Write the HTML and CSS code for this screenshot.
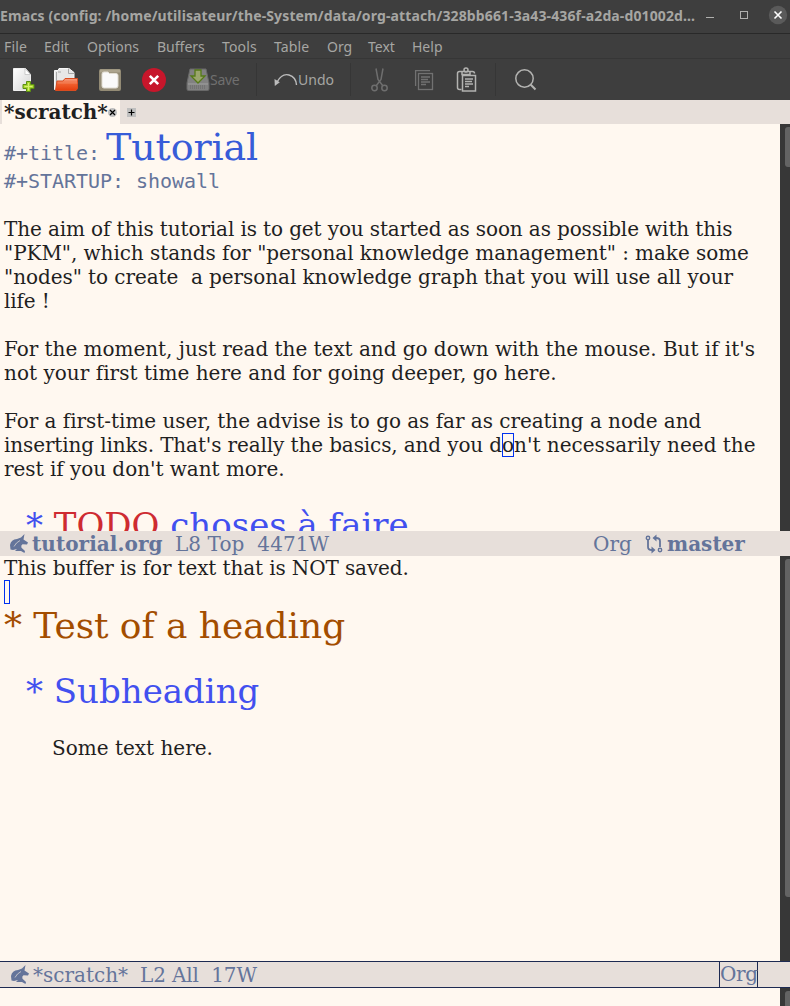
FILE: index.html
```html
<!DOCTYPE html>
<html lang="en">
<head>
<meta charset="utf-8">
<title>Emacs</title>
<link rel="stylesheet" href="styles.css">
</head>
<body>
<div class="window">
  <header class="titlebar">
    <span class="caption">Emacs (config: /home/utilisateur/the-System/data/org-attach/328bb661-3a43-436f-a2da-d01002d…</span>
    <svg class="controls" width="90" height="33" viewBox="0 0 90 33">
      <path d="M6 17.500h8" stroke="#b0b0ae" fill="none"/>
      <rect x="40.500" y="11.500" width="7" height="7" stroke="#b0b0ae" fill="none"/>
      <circle cx="78" cy="15" r="9.200" fill="#5a5a5a"/>
      <path d="M74.500 11.500l7 7m0-7l-7 7" stroke="#fff" stroke-width="1.600"/>
    </svg>
  </header>
  <nav class="menubar">
    <span class="m-file">File</span><span class="m-edit">Edit</span><span class="m-options">Options</span><span class="m-buffers">Buffers</span><span class="m-tools">Tools</span><span class="m-table">Table</span><span class="m-org">Org</span><span class="m-text">Text</span><span class="m-help">Help</span>
  </nav>
  <div class="toolbar">
    <svg class="t-new" width="24" height="26" viewBox="0 0 24 26">
      <defs>
        <linearGradient id="paper" x1="0" y1="0" x2="1" y2="1"><stop offset="0" stop-color="#fff"/><stop offset="1" stop-color="#d5d5d5"/></linearGradient>
        <linearGradient id="orange" x1="0" y1="0" x2="0" y2="1"><stop offset="0" stop-color="#f7a184"/><stop offset=".45" stop-color="#f0602f"/><stop offset="1" stop-color="#e43d0d"/></linearGradient>
      </defs>
      <path d="M1.500 1.500h12l5 6v16h-17z" fill="url(#paper)" stroke="#f0f0f0"/>
      <path d="M13 1.500v6h5.500z" fill="#fff" stroke="#bbb" stroke-width=".7"/>
      <path d="M14.500 14.500h4v3h3.500v4h-3.500v3h-4v-3h-3.500v-4h3.500z" fill="#a5d52d" stroke="#5b8e10"/>
      <path d="M16.500 16v7.500M12.500 19.500h8" stroke="#d7f06e"/>
    </svg>
    <svg class="t-open" width="26" height="26" viewBox="0 0 26 26">
      <path d="M1.500 3.500h3.500l1-2h10l5 4v17h-19.500z" fill="#e7e7e7" stroke="#f6f6f6"/>
      <path d="M3.500 5v17M5 5h3M15.500 1.500v5h5.500" stroke="#a7a7a7" fill="none"/>
      <path d="M2.500 23.500l1.500-9.500h6l2-2.500h12.500v10l-1.500 2z" fill="url(#orange)" stroke="#d94c20"/>
      <path d="M4.500 16h20" stroke="#f79a79" opacity=".5"/>
    </svg>
    <svg class="t-folder" width="24" height="24" viewBox="0 0 24 24">
      <rect x="1" y="1" width="22" height="22" rx="2" fill="#938b75"/>
      <rect x="2" y="1.500" width="20" height="3" fill="#aca48e"/>
      <path d="M4 6q0-2 2-2h4l1.500 1.500H18q2 0 2 2V18q0 2-2 2H6q-2 0-2-2z" fill="#fafafa" stroke="#e1ddd3"/>
    </svg>
    <svg class="t-kill" width="26" height="26" viewBox="0 0 26 26">
      <circle cx="13" cy="13" r="12" fill="#c7162b"/>
      <path d="M8.800 8.800l8.400 8.400m0-8.400l-8.400 8.400" stroke="#fff" stroke-width="2.600"/>
    </svg>
    <svg class="t-save" width="24" height="24" viewBox="0 0 24 24">
      <path d="M4 1h16l3 14v6q0 1.500-1.500 1.500h-19Q1 22.500 1 21v-6z" fill="#818181" stroke="#696969"/>
      <path d="M2 16h20" stroke="#a0a0a0"/><path d="M4 18h16M4 20h16" stroke="#666" stroke-dasharray="1 1"/>
      <path d="M9 2h6v6h4l-7 7-7-7h4z" fill="#9ba66c" stroke="#567a18" stroke-width="1.300"/>
    </svg>
    <span class="save-label">Save</span>
    <i class="sep s1"></i>
    <svg class="t-undo" width="24" height="16" viewBox="0 0 24 16">
      <path d="M3 10Q8 1 15 3q7 2 7.500 10" fill="none" stroke="#bcbcbc" stroke-width="1.400"/>
      <path d="M.5 7l.3 7 5-3.800z" fill="#bcbcbc"/>
    </svg>
    <span class="undo-label">Undo</span>
    <i class="sep s2"></i>
    <svg class="t-cut" width="20" height="26" viewBox="0 0 20 26" fill="none" stroke="#6e6e6e" stroke-width="1.500">
      <path d="M6 1.500l2 11 5 6.500M13 1.500l-2 11-5 6.500"/><circle cx="4.500" cy="21" r="2.700"/><circle cx="14.500" cy="21" r="2.700"/>
    </svg>
    <svg class="t-copy" width="20" height="22" viewBox="0 0 20 22" fill="none" stroke="#717171" stroke-width="1.300">
      <path d="M1.600 17V1.600H16"/><rect x="4.500" y="4.500" width="14" height="16"/><path d="M7 8h9M7 10.500h7M7 13h9M7 15.500h5"/>
    </svg>
    <svg class="t-paste" width="22" height="26" viewBox="0 0 22 26" fill="none" stroke="#b3b3b1" stroke-width="1.500">
      <path d="M5.500 22.500h-2q-2 0-2-2v-14q0-2 2-2h13q2 0 2 2M6 4.500v3h8v-3"/><circle cx="10" cy="3" r="2"/><rect x="6.500" y="8.500" width="13" height="15.500"/><path d="M9 12h8M9 14.500h7M9 17h8M9 19.500h4"/>
    </svg>
    <i class="sep s3"></i>
    <svg class="t-find" width="24" height="24" viewBox="0 0 24 24" fill="none" stroke="#b3b3b1" stroke-width="1.500">
      <circle cx="10.500" cy="10.500" r="8.700"/><path d="M16.800 16.800l4.700 4.700" stroke-width="2"/>
    </svg>
  </div>
  <div class="tabs">
    <div class="tab"><b>*scratch*</b><svg width="9" height="9" viewBox="0 0 9 9"><circle cx="4.500" cy="4.500" r="4.500" fill="#bfbfbf"/><path d="M2 2l5 5m0-5l-5 5" stroke="#000" stroke-width="1.200"/></svg></div>
    <svg class="add" width="9" height="9" viewBox="0 0 9 9"><path d="M0 0h9v9H0z" fill="#bfbfbf"/><path d="M1.500 4.500h6M4.500 1.500v6" stroke="#000" stroke-width="1.200"/></svg>
  </div>
  <div class="pane top">
    <main class="buffer">
      <div class="doc-title"><span class="meta">#+title: </span><span class="title-text">Tutorial</span></div>
      <div class="line meta">#+STARTUP: showall</div>
      <div class="line"></div>
      <div class="line tight">The aim of this tutorial is to get you started as soon as possible with this</div>
      <div class="line snug">"PKM", which stands for "personal knowledge management" : make some</div>
      <div class="line snug">"nodes" to create&nbsp; a personal knowledge graph that you will use all your</div>
      <div class="line tight">life !</div>
      <div class="line"></div>
      <div class="line slim">For the moment, just read the text and go down with the mouse. But if it's</div>
      <div class="line loose">not your first time here and for going deeper, go here.</div>
      <div class="line"></div>
      <div class="line slim">For a first-time user, the advise is to go as far as creating a node and</div>
      <div class="line"><span class="tight">inserting links. That's really the basics, and you d</span><span class="cursor">o</span>n't necessarily need the</div>
      <div class="line slim">rest if you don't want more.</div>
      <div class="line"></div>
      <div class="h2">* <span class="todo">TODO</span> choses à faire</div>
    </main>
    <div class="scroll"><div class="thumb"></div></div>
  </div>
  <div class="modeline inactive">
    <svg class="unicorn" width="19" height="20" viewBox="0 0 19 20"><path d="M1 11Q2 5.500 8 5L12 3.500 15.500 0 14.500 5.500 19 8.500l-1 2-4.500-.2q-2 1.200-1 3.500l3.500 3.200-.5 2-3.500-2H6l2-2-4 1-2.500-.5z" fill="#64749a"/><path d="M5 12.500q2-4 6-6" fill="none" stroke="#e7dfda" stroke-width=".7"/></svg>
    <b class="name">tutorial.org</b><span class="info">L8 Top&nbsp; 4471W</span>
    <span class="mode">Org</span>
    <svg class="branch" width="18" height="20" viewBox="0 0 18 20" fill="none" stroke="#64749a" stroke-width="1.800"><circle cx="3" cy="4" r="1.700" stroke-width="1.400"/><path d="M3 6v7q0 3 4 3M15 13V7q0-3-4-3"/><circle cx="15" cy="16" r="1.700" stroke-width="1.400"/><path d="M6.500 12.500v7l4-3.500zM11.500.5v7l-4-3.500z" fill="#64749a" stroke="none"/></svg>
    <b class="master">master</b>
  </div>
  <div class="pane bottom">
    <main class="buffer">
      <div class="line tight">This buffer is for text that is NOT saved.</div>
      <div class="line"><span class="cursor empty"></span></div>
      <div class="h1">* Test of a heading</div>
      <div class="line"></div>
      <div class="h2">* Subheading</div>
      <div class="line"></div>
      <div class="line indented">Some text here.</div>
    </main>
    <div class="scroll"><div class="thumb"></div></div>
  </div>
  <div class="modeline active">
    <svg class="unicorn" width="19" height="20" viewBox="0 0 19 20"><path d="M1 11Q2 5.500 8 5L12 3.500 15.500 0 14.500 5.500 19 8.500l-1 2-4.500-.2q-2 1.200-1 3.500l3.500 3.200-.5 2-3.500-2H6l2-2-4 1-2.500-.5z" fill="#64749a"/><path d="M5 12.500q2-4 6-6" fill="none" stroke="#e7dfda" stroke-width=".7"/></svg>
    <span class="name">*scratch*</span><span class="info">L2 All&nbsp; 17W</span>
    <span class="boxed">Org</span>
  </div>
  <div class="pane mini"><main class="buffer"></main><div class="scroll"><div class="thumb"></div></div></div>
</div>
</body>
</html>
```
FILE: styles.css
```css
* { box-sizing: border-box; }
body { margin: 0; }
.window {
  width: 790px; height: 1006px; overflow: hidden;
  display: grid; grid-template-rows: 34px 25px 41px 24px 407px 25px 405px 27px 18px;
  font: 20px/24px "DejaVu Serif", serif; color: #1f1f1f; background: #fff8f0;
}
svg { display: block; flex: none; }
.titlebar, .menubar, .toolbar { background: #3e3e3e; color: #a6a6a3; font-family: "Noto Sans", sans-serif; display: flex; }
.titlebar { border-bottom: 1px solid #292929; justify-content: space-between; }
.caption { font-size: 14px; font-weight: 700; line-height: 31px; letter-spacing: .12px; white-space: nowrap; }
.menubar { border-bottom: 1px solid #363636; font-size: 14px; line-height: 25px; padding-left: 4px; }
.m-file { width: 40px; } .m-edit { width: 43px; } .m-options { width: 70px; } .m-buffers { width: 65px; }
.m-tools { width: 52px; } .m-table { width: 53px; } .m-org { width: 41px; } .m-text { width: 44px; }
.m-file, .m-tools, .m-table { letter-spacing: .15px; }
.toolbar { align-items: center; font-size: 14px; padding-left: 12px; }
.t-open { margin-left: 17px; }
.t-folder { margin-left: 19px; }
.t-kill { margin-left: 19px; }
.t-save { margin-left: 19px; }
.save-label { color: #6f6f6f; width: 46px; letter-spacing: -.3px; }
.sep { width: 1px; height: 33px; background: #363636; }
.t-undo { margin-left: 17px; }
.undo-label { width: 52px; }
.t-cut { margin-left: 19px; }
.t-copy { margin-left: 24px; }
.t-paste { margin-left: 22px; }
.s3 { margin-left: 17px; }
.t-find { margin-left: 18px; }
.tabs { background: #e7dfda; display: flex; align-items: center; padding-left: 2px; }
.tab { width: 118px; height: 24px; background: #fff8f0; padding-left: 2px; display: flex; align-items: center; }
.tab b { width: 104px; }
.add { margin-left: 7px; }
.pane { display: grid; grid-template-columns: 780px 10px; min-height: 0; overflow: hidden; }
.buffer { padding-left: 4px; overflow: hidden; min-height: 0; }
.line { height: 24px; white-space: pre; }
.tight { letter-spacing: -.12px; }
.snug { letter-spacing: -.065px; }
.slim { letter-spacing: -.035px; }
.loose { letter-spacing: .03px; }
.meta { font-family: "DejaVu Sans Mono", monospace; font-size: 20px; color: #64749a; letter-spacing: -.04px; }
.doc-title { height: 45px; line-height: 47px; display: flex; align-items: baseline; }
.doc-title .meta { width: 102px; }
.title-text { font-size: 38px; color: #375cd8; letter-spacing: -.12px; }
.h1 { height: 42px; line-height: 44px; font-size: 36px; color: #a34d00; letter-spacing: -.07px; white-space: pre; }
.h2 { height: 42px; line-height: 40px; font-size: 34px; color: #4250ef; padding-left: 22px; white-space: pre; }
.bottom .h2 { line-height: 42px; }
.todo { color: #ce2b31; }
.indented { padding-left: 48px; }
.cursor { outline: 1px solid #0031ef; outline-offset: -1px; display: inline-block; height: 24px; vertical-align: top; }
.empty { width: 6px; }
.scroll { background: #373737; padding-left: 5px; }
.thumb { background: #636363; border-radius: 3px 0 0 3px; margin-top: 3px; height: 40px; }
.bottom .thumb { height: 338px; }
.modeline { background: #e7dfda; color: #64749a; display: flex; align-items: center; padding-left: 9px; }
.info { white-space: pre; }
.inactive .info { letter-spacing: .08px; }
.active .info { letter-spacing: -.13px; }
.inactive .name { margin-left: 4px; width: 143px; letter-spacing: .06px; }
.mode { margin-left: auto; width: 52px; }
.branch { margin-right: 4px; }
.master { width: 123px; }
.active { border: solid #1d2a52; border-width: 1px 0; }
.active .unicorn { margin-left: 1px; }
.active .name { margin-left: 4px; width: 107px; }
.boxed { margin-left: auto; width: 39px; height: 25px; border: solid #1d2a52; border-width: 0 1px; margin-right: 32px; letter-spacing: -.3px; }
```
